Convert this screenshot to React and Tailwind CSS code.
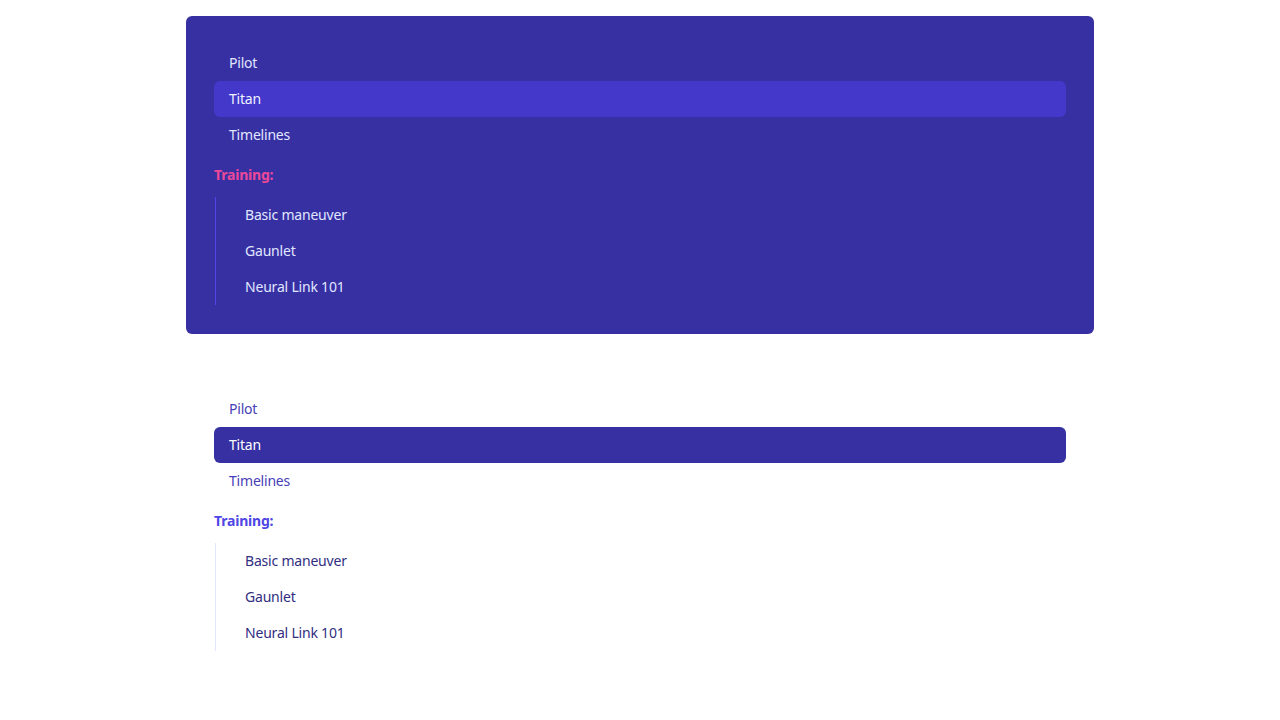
import React from "react";

const top = ["Pilot", "Titan", "Timelines"];
const training = ["Basic maneuver", "Gaunlet", "Neural Link 101"];

function Nav({ dark }) {
  const item = (label, active) => {
    let cls = "block rounded-md px-[15px] py-2 text-[14px] leading-5 ";
    if (dark) {
      cls += active ? "bg-[#4338ca] text-[#eef2ff]" : "text-[#e0e7ff]";
    } else {
      cls += active ? "bg-[#3730a3] text-white" : "text-[#4840b8]";
    }
    return (
      <li key={label}>
        <a className={cls}>{label}</a>
      </li>
    );
  };
  const sub = (label) => (
    <li key={label}>
      <a
        className={
          "block rounded-md px-[14px] py-2 text-[14px] leading-5 " +
          (dark ? "text-[#e0e7ff]" : "text-[#312e81]")
        }
      >
        {label}
      </a>
    </li>
  );
  return (
    <nav
      className={
        "w-[908px] mx-auto px-7 py-[28.8px] rounded-md tracking-[-0.2px] " +
        (dark ? "bg-[#3730a3]" : "bg-white")
      }
    >
      <ul className="flex flex-col">{top.map((l) => item(l, l === "Titan"))}</ul>
      <p
        className={
          "my-3 text-[14px] leading-5 font-bold " +
          (dark ? "text-[#ec4899]" : "text-[#4f46e5]")
        }
      >
        Training:
      </p>
      <ul
        className={
          "flex flex-col border-l ml-px pl-[15px] " +
          (dark ? "border-[#4f46e5]" : "border-[#e0e7ff]")
        }
      >
        {training.map(sub)}
      </ul>
    </nav>
  );
}

export default function App() {
  return (
    <div
      className="min-h-screen bg-white pt-4 flex flex-col gap-[28.8px]"
      style={{ fontFamily: '"Noto Sans", "Open Sans", sans-serif' }}
    >
      <Nav dark />
      <Nav />
    </div>
  );
}
